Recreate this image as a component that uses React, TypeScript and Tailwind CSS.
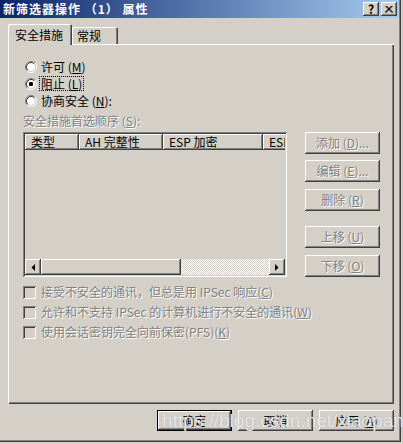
import React from 'react';

const raised =
  'shadow-[inset_-1px_-1px_0_#404040,inset_1px_1px_0_#ffffff,inset_-2px_-2px_0_#808080]';
const dim = 'text-[#808080] [text-shadow:1px_1px_0_#ffffff]';

const Radio: React.FC<{ checked?: boolean }> = ({ checked }) => (
  <svg width="12" height="12" viewBox="0 0 12 12" className="shrink-0">
    <circle cx="6" cy="6" r="4" fill="#ffffff" />
    <path d="M2.11 9.89 A5.5 5.5 0 0 1 9.89 2.11" stroke="#808080" fill="none" />
    <path d="M9.89 2.11 A5.5 5.5 0 0 1 2.11 9.89" stroke="#ffffff" fill="none" />
    <path d="M2.82 9.18 A4.5 4.5 0 0 1 9.18 2.82" stroke="#404040" fill="none" />
    <path d="M9.18 2.82 A4.5 4.5 0 0 1 2.82 9.18" stroke="#d4d0c8" fill="none" />
    {checked && <rect x="4" y="4" width="4" height="4" rx="1.2" fill="#000000" />}
  </svg>
);

const Check: React.FC = () => (
  <div className="w-[13px] h-[13px] shrink-0 bg-[#d4d0c8] shadow-[inset_1px_1px_0_#808080,inset_-1px_-1px_0_#ffffff,inset_2px_2px_0_#404040,inset_-2px_-2px_0_#d4d0c8]" />
);

const SideButton: React.FC<{ label: string; k: string; tail?: string; className?: string }> = ({ label, k, tail, className }) => (
  <div className={`w-[75px] h-[22px] flex items-center justify-center text-[12px] ${raised} ${dim} ${className ?? ''}`}>
    {label} (<u>{k}</u>){tail}
  </div>
);

const Arrow: React.FC<{ dir: 'left' | 'right' }> = ({ dir }) => (
  <div className={`w-[16px] h-[16px] shrink-0 flex items-center justify-center bg-[#d4d0c8] ${raised}`}>
    <svg width="4" height="7" viewBox="0 0 4 7">
      {dir === 'left' ? <path d="M4 0 L4 7 L0.5 3.5 Z" fill="#000" /> : <path d="M0 0 L0 7 L3.5 3.5 Z" fill="#000" />}
    </svg>
  </div>
);

export default function App() {
  return (
    <div className="w-[403px] h-[444px] bg-[#d4d0c8] font-['Noto_Sans_CJK_SC',sans-serif] text-black relative overflow-hidden">
      <div className="w-[401px] h-[442px] flex flex-col shadow-[inset_-1px_-1px_0_#404040,inset_-2px_-2px_0_#808080]">
        {/* title bar */}
        <div className="h-[18px] mr-[2px] flex items-center justify-between bg-[linear-gradient(to_right,#0a246a,#a6caf0)]">
          <div className="pl-[3px] text-white font-bold text-[12px] leading-none tracking-[1px] whitespace-nowrap">
            新筛选器操作 （1） 属性
          </div>
          <div className="flex gap-[2px] pr-[2px]">
            <div className={`w-[16px] h-[14px] bg-[#d4d0c8] flex items-center justify-center text-[12px] font-bold leading-none ${raised}`}>?</div>
            <div className={`w-[16px] h-[14px] bg-[#d4d0c8] flex items-center justify-center ${raised}`}>
              <svg width="8" height="7" viewBox="0 0 8 7">
                <path d="M0.5 0 L7.5 7 M1.5 0 L8 6.5 M7.5 0 L0.5 7 M6.5 0 L0 6.5" stroke="#000" strokeWidth="1" />
              </svg>
            </div>
          </div>
        </div>

        <div className="flex flex-col pl-[8px] pr-[7px]">
          {/* tabs */}
          <div className="h-[26px] flex items-end">
            <div className="relative z-10 w-[64px] h-[21px] -mb-px bg-[#d4d0c8] flex items-center pl-[7px] text-[12px] rounded-t-[2px] shadow-[inset_1px_1px_0_#ffffff,inset_-1px_0_0_#404040,inset_-2px_0_0_#808080]">
              安全措施
            </div>
            <div className="w-[46px] h-[17px] bg-[#d4d0c8] flex items-center pl-[5px] pt-[1px] text-[12px] rounded-t-[2px] shadow-[inset_1px_1px_0_#ffffff,inset_-1px_0_0_#404040,inset_-2px_0_0_#808080]">
              常规
            </div>
          </div>

          {/* panel */}
          <div className="h-[360px] flex flex-col pl-[15px] pt-[14px] text-[12px] shadow-[inset_1px_1px_0_#ffffff,inset_-1px_-1px_0_#404040,inset_-2px_-2px_0_#808080]">
            <div className="h-[17px] flex items-center pl-[2px] gap-[4px]">
              <Radio />
              <span>许可 (<u>M</u>)</span>
            </div>
            <div className="h-[17px] flex items-center pl-[2px] gap-[3px]">
              <Radio checked />
              <span className="outline-1 outline-dotted outline-black px-px leading-[13px]">阻止 (<u>L</u>)</span>
            </div>
            <div className="h-[17px] flex items-center pl-[2px] gap-[4px]">
              <Radio />
              <span>协商安全 (<u>N</u>):</span>
            </div>
            <div className={`h-[17px] mt-[3px] flex items-center ${dim}`}>
              安全措施首选顺序 (<u>S</u>):
            </div>

            <div className="mt-[3px] flex">
              {/* list view */}
              <div className="w-[264px] h-[145px] p-[2px] flex flex-col bg-[#d4d0c8] shadow-[inset_1px_1px_0_#808080,inset_-1px_-1px_0_#ffffff,inset_2px_2px_0_#404040,inset_-2px_-2px_0_#d4d0c8]">
                <div className="h-[16px] flex overflow-hidden whitespace-nowrap">
                  <div className={`w-[54px] shrink-0 pl-[6px] flex items-center ${raised}`}>类型</div>
                  <div className={`w-[84px] shrink-0 pl-[6px] flex items-center ${raised}`}>AH 完整性</div>
                  <div className={`w-[100px] shrink-0 pl-[6px] flex items-center ${raised}`}>ESP 加密</div>
                  <div className={`w-[100px] shrink-0 pl-[6px] flex items-center ${raised}`}>ESP 解密</div>
                </div>
                <div className="flex-1" />
                <div className="h-[16px] flex">
                  <Arrow dir="left" />
                  <div className={`w-[140px] shrink-0 bg-[#d4d0c8] ${raised}`} />
                  <div className="flex-1 bg-[repeating-conic-gradient(#ffffff_0_25%,#d4d0c8_0_50%)] bg-size-[2px_2px]" />
                  <Arrow dir="right" />
                </div>
              </div>

              {/* side buttons */}
              <div className="ml-[18px] flex flex-col">
                <SideButton label="添加" k="D" tail="..." />
                <SideButton label="编辑" k="E" tail="..." className="mt-[6px]" />
                <SideButton label="删除" k="R" className="mt-[7px]" />
                <SideButton label="上移" k="U" className="mt-[15px]" />
                <SideButton label="下移" k="O" className="mt-[7px]" />
              </div>
            </div>

            <div className="mt-[5px] flex flex-col">
              <div className="h-[20px] flex items-center gap-[5px]">
                <Check />
                <span className={dim}>接受不安全的通讯，但总是用 IPSec 响应(<u>C</u>)</span>
              </div>
              <div className="h-[20px] flex items-center gap-[5px]">
                <Check />
                <span className={dim}>允许和不支持 IPSec 的计算机进行不安全的通讯(<u>W</u>)</span>
              </div>
              <div className="h-[20px] flex items-center gap-[5px]">
                <Check />
                <span className={dim}>使用会话密钥完全向前保密(PFS)(<u>K</u>)</span>
              </div>
            </div>
          </div>

          {/* bottom buttons */}
          <div className="mt-[6px] flex justify-end gap-[6px] text-[12px]">
            <div className="w-[75px] h-[21px] flex items-center justify-center shadow-[inset_0_0_0_1px_#000000,inset_-2px_-2px_0_#404040,inset_2px_2px_0_#ffffff,inset_-3px_-3px_0_#808080]">
              确定
            </div>
            <div className={`w-[75px] h-[21px] flex items-center justify-center ${raised}`}>取消</div>
            <div className={`w-[75px] h-[21px] flex items-center justify-center ${raised}`}>
              应用 (<u>A</u>)
            </div>
          </div>
        </div>
      </div>

      {/* watermark */}
      <div className="absolute left-[162px] top-[407px] font-['Liberation_Sans',sans-serif] text-[19px] text-white/75 [text-shadow:0_0_1px_#9a9a9a] whitespace-nowrap pointer-events-none">
        https://blog.csdn.net/xiaopan233
      </div>
    </div>
  );
}
